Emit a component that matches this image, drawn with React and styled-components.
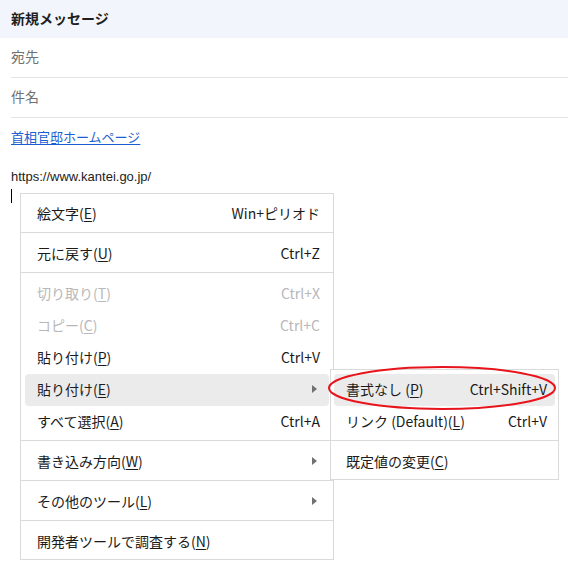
import React from "react";
import styled, { createGlobalStyle } from "styled-components";

const GlobalStyle = createGlobalStyle`
  html, body { margin: 0; padding: 0; background: #ffffff; }
  body { font-family: "Noto Sans CJK JP", "Noto Sans", sans-serif; }
`;

const Page = styled.div`
  position: relative;
  width: 568px;
  height: 575px;
  overflow: hidden;
  background: #ffffff;
`;

const Header = styled.div`
  height: 38px;
  box-sizing: border-box;
  padding: 0 11px 2px;
  display: flex;
  align-items: center;
  background: #f2f6fc;
  color: #1f1f1f;
  font-size: 14px;
  font-weight: 700;
`;

const FieldRow = styled.div`
  margin-left: 11px;
  height: 40px;
  box-sizing: border-box;
  border-bottom: 1px solid #e4e4e4;
  display: flex;
  align-items: center;
  padding-bottom: 3px;
  color: #717171;
  font-size: 14px;
`;

const Body = styled.div`
  padding: 9px 11px 0;
`;

const Link = styled.a`
  display: block;
  height: 20px;
  line-height: 20px;
  font-size: 13px;
  color: #1a5fd1;
  text-decoration: underline;
  text-underline-offset: 2px;
`;

const Para = styled.div`
  margin-top: 20px;
  height: 20px;
  line-height: 20px;
  font-family: "Liberation Sans", Arial, sans-serif;
  font-size: 13px;
  color: #222222;
`;

const Caret = styled.div`
  margin-top: 2px;
  width: 1px;
  height: 14px;
  background: #000000;
`;

const Menu = styled.div`
  position: absolute;
  left: ${(p) => p.$left}px;
  top: ${(p) => p.$top}px;
  width: ${(p) => p.$width}px;
  box-sizing: border-box;
  background: #ffffff;
  border: 1px solid #dadada;
  padding: ${(p) => p.$pad};
  font-family: "Noto Sans CJK JP", sans-serif;
  font-size: 14px;
  color: #1b1b1b;
`;

const Item = styled.div`
  height: 32px;
  margin: 0 ${(p) => p.$inset}px;
  padding: 0 ${(p) => p.$padR}px 2px ${(p) => p.$padL}px;
  box-sizing: border-box;
  border-radius: 4px;
  display: flex;
  align-items: center;
  justify-content: space-between;
  background: ${(p) => (p.$active ? "#ebebeb" : "transparent")};
  color: ${(p) => (p.$disabled ? "#b8b8b8" : "#1b1b1b")};
`;

const Label = styled.span`
  white-space: pre;
  u { text-underline-offset: 2px; }
`;

const Shortcut = styled.span`
  white-space: pre;
`;

const Arrow = styled.span`
  width: 0;
  height: 0;
  border-top: 4px solid transparent;
  border-bottom: 4px solid transparent;
  border-left: 5px solid #707070;
  margin-right: 3px;
`;

const Separator = styled.div`
  height: 1px;
  background: #dadada;
  margin: 2px 0 5px;
`;

const Ellipse = styled.svg`
  position: absolute;
  left: 326px;
  top: 363px;
  overflow: visible;
`;

const M = ({ children }) => <u>{children}</u>;

const mainItems = [
  { label: <>絵文字(<M>E</M>)</>, sc: "Win+ピリオド" },
  "sep",
  { label: <>元に戻す(<M>U</M>)</>, sc: "Ctrl+Z" },
  "sep",
  { label: <>切り取り(<M>T</M>)</>, sc: "Ctrl+X", disabled: true },
  { label: <>コピー(<M>C</M>)</>, sc: "Ctrl+C", disabled: true },
  { label: <>貼り付け(<M>P</M>)</>, sc: "Ctrl+V" },
  { label: <>貼り付け(<M>E</M>)</>, arrow: true, active: true },
  { label: <>すべて選択(<M>A</M>)</>, sc: "Ctrl+A" },
  "sep",
  { label: <>書き込み方向(<M>W</M>)</>, arrow: true },
  "sep",
  { label: <>その他のツール(<M>L</M>)</>, arrow: true },
  "sep",
  { label: <>開発者ツールで調査する(<M>N</M>)</> },
];

const subItems = [
  { label: <>書式なし (<M>P</M>)</>, sc: "Ctrl+Shift+V", active: true },
  { label: <>リンク (Default)(<M>L</M>)</>, sc: "Ctrl+V" },
  "sep",
  { label: <>既定値の変更(<M>C</M>)</> },
];

const renderItems = (items, inset, padL, padR) =>
  items.map((it, i) =>
    it === "sep" ? (
      <Separator key={i} />
    ) : (
      <Item
        key={i}
        $inset={inset}
        $padL={padL}
        $padR={padR}
        $active={it.active}
        $disabled={it.disabled}
      >
        <Label>{it.label}</Label>
        {it.sc && <Shortcut>{it.sc}</Shortcut>}
        {it.arrow && <Arrow />}
      </Item>
    )
  );

export default function App() {
  return (
    <Page>
      <GlobalStyle />
      <Header>新規メッセージ</Header>
      <FieldRow>宛先</FieldRow>
      <FieldRow>件名</FieldRow>
      <Body>
        <Link href="#">首相官邸ホームページ</Link>
        <Para>https://www.kantei.go.jp/</Para>
        <Caret />
      </Body>
      <Menu $left={20} $top={193} $width={314} $pad="4px 0 1px">
        {renderItems(mainItems, 4, 12, 9)}
      </Menu>
      <Menu $left={330} $top={369} $width={229} $pad="4px 0 1px">
        {renderItems(subItems, 3, 12, 8)}
      </Menu>
      <Ellipse width="232" height="48" viewBox="0 0 232 48">
        <ellipse cx="116" cy="25" rx="113" ry="21" fill="none" stroke="#e8141b" strokeWidth="2" />
      </Ellipse>
    </Page>
  );
}
